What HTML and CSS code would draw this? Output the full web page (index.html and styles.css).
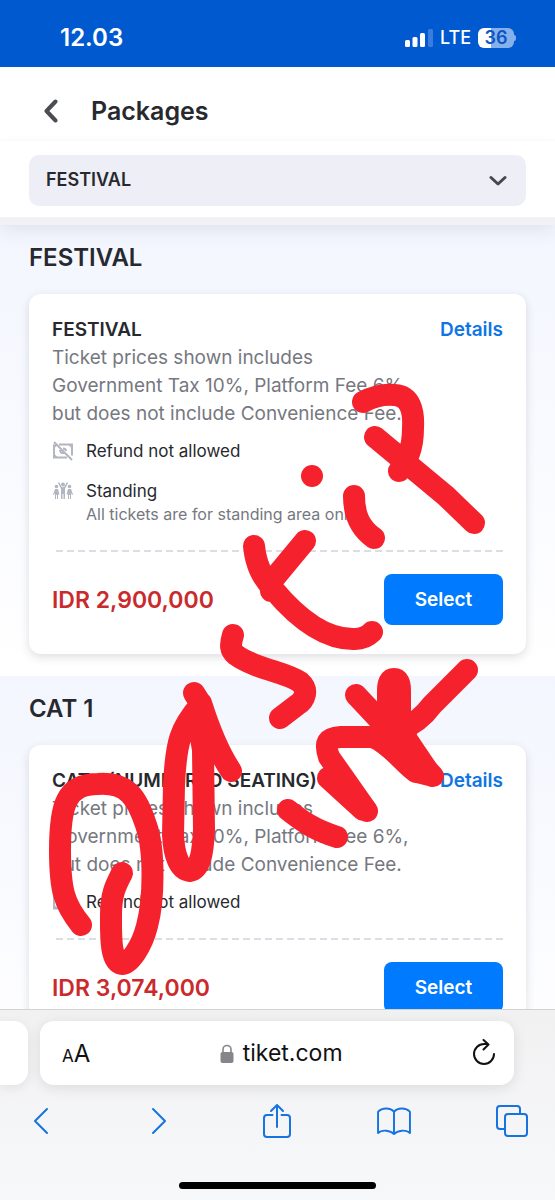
FILE: index.html
```html
<!DOCTYPE html>
<html lang="en">
<head>
<meta charset="utf-8">
<meta name="viewport" content="width=device-width, initial-scale=1">
<title>Packages</title>
<link rel="stylesheet" href="styles.css">
</head>
<body>
<div class="screen">
  <div class="status">
    <span class="status-time">12.03</span>
    <div class="status-right">
      <svg class="signal" width="28" height="18" viewBox="0 0 28 18" aria-hidden="true">
        <rect x="0" y="11" width="5" height="7" rx="1.5" fill="#fff"/>
        <rect x="7.500" y="8" width="5" height="10" rx="1.500" fill="#fff"/>
        <rect x="15" y="4" width="5" height="14" rx="1.500" fill="#fff"/>
        <rect x="23" y="0" width="5" height="18" rx="1.500" fill="#3a7de0"/>
      </svg>
      <span class="network">LTE</span>
      <span class="battery">36</span>
    </div>
  </div>

  <header class="top">
    <button class="back" type="button" aria-label="Back">
      <svg width="14" height="24" viewBox="0 0 14 24"><path d="M11.500 2.500L2.500 12l9 9.500" fill="none" stroke="#4a4d52" stroke-width="4" stroke-linecap="round" stroke-linejoin="round"/></svg>
    </button>
    <h1 class="top-title">Packages</h1>
  </header>

  <div class="filter">
    <div class="picker">
      <select class="picker-select" aria-label="Package category">
        <option>FESTIVAL</option>
        <option>CAT 1</option>
      </select>
      <svg class="picker-arrow" width="18" height="12" viewBox="0 0 18 12" aria-hidden="true"><path d="M2 2.500l7 6.500 7-6.500" fill="none" stroke="#44484f" stroke-width="3" stroke-linecap="round" stroke-linejoin="round"/></svg>
    </div>
  </div>

  <main class="list">
    <section class="group">
      <h2 class="group-title">FESTIVAL</h2>
      <article class="card">
        <div class="card-head">
          <h3 class="card-title">FESTIVAL</h3>
          <a class="details" href="#festival">Details</a>
        </div>
        <p class="desc">Ticket prices shown includes Government Tax 10%, Platform Fee 6%, but does not include Convenience Fee.</p>
        <ul class="facts">
          <li class="fact">
            <svg class="fact-icon" width="22" height="22" viewBox="0 0 22 22" aria-hidden="true"><path d="M7 4.500h13v11M15 17.500H2v-13" fill="none" stroke="#b3b6c2" stroke-width="2"/><path d="M2 4.500l4 0-4 4zM20 4.500v4l-4-4zM2 17.500v-4l4 4z" fill="#b3b6c2"/><path d="M8 10c0 2 1.500 3.500 4 3M11 8.500c2 0 3 1 3 2.500M2 2l18 18" fill="none" stroke="#b3b6c2" stroke-width="2"/></svg>
            <span class="fact-name">Refund not allowed</span>
          </li>
          <li class="fact">
            <svg class="fact-icon" width="22" height="22" viewBox="0 0 22 22" aria-hidden="true"><g fill="#b3b6c2"><circle cx="11" cy="4.500" r="2"/><circle cx="4.500" cy="6.500" r="1.800"/><circle cx="17.500" cy="6.500" r="1.800"/><path d="M3 9h3l1.500 5.500-1 .5L6 13v6H5v-4H4v4H3v-6l-1 2-1-.5zM16 9h3l2 5.500-1 .5-1-2v6h-1v-4h-1v4h-1v-6l-.5 2-1-.5z"/></g><path d="M6.500 2.500L9.500 8h3l3-5.500" fill="none" stroke="#b3b6c2" stroke-width="1.500"/><path d="M9 7.500h4V19h-1.500v-5h-1v5H9z" fill="#b3b6c2"/></svg>
            <span class="fact-name">Standing</span>
            <span class="fact-note">All tickets are for standing area only</span>
          </li>
        </ul>
        <div class="buy">
          <strong class="price">IDR 2,900,000</strong>
          <button class="select" type="button">Select</button>
        </div>
      </article>
    </section>

    <section class="group">
      <h2 class="group-title">CAT 1</h2>
      <article class="card">
        <div class="card-head">
          <h3 class="card-title">CAT 1 (NUMBERED SEATING)</h3>
          <a class="details" href="#cat-1">Details</a>
        </div>
        <p class="desc">Ticket prices shown includes Government Tax 10%, Platform Fee 6%, but does not include Convenience Fee.</p>
        <ul class="facts">
          <li class="fact">
            <svg class="fact-icon" width="22" height="22" viewBox="0 0 22 22" aria-hidden="true"><path d="M7 4.500h13v11M15 17.500H2v-13" fill="none" stroke="#b3b6c2" stroke-width="2"/><path d="M2 4.500l4 0-4 4zM20 4.500v4l-4-4zM2 17.500v-4l4 4z" fill="#b3b6c2"/><path d="M8 10c0 2 1.500 3.500 4 3M11 8.500c2 0 3 1 3 2.500M2 2l18 18" fill="none" stroke="#b3b6c2" stroke-width="2"/></svg>
            <span class="fact-name">Refund not allowed</span>
          </li>
        </ul>
        <div class="buy">
          <strong class="price">IDR 3,074,000</strong>
          <button class="select" type="button">Select</button>
        </div>
      </article>
    </section>
  </main>

  <footer class="browser">
    <div class="tabs">
      <div class="tab-prev"></div>
      <div class="address">
        <button class="text-size" type="button" aria-label="Page settings"><span class="small-a">A</span>A</button>
        <button class="site" type="button">
          <svg width="14" height="19" viewBox="0 0 14 19" aria-hidden="true"><rect x="0.500" y="8" width="13" height="11" rx="2" fill="#86868a"/><path d="M3 9V5.500a4 4 0 0 1 8 0V9" fill="none" stroke="#86868a" stroke-width="1.600"/></svg>
          tiket.com
        </button>
        <button class="reload" type="button" aria-label="Reload">
          <svg width="24" height="28" viewBox="0 0 24 28"><path d="M22 15A10 10 0 1 1 12 5h4M11.500 1l5 4.500-5 5" fill="none" stroke="#111" stroke-width="2" stroke-linecap="round" stroke-linejoin="round"/></svg>
        </button>
      </div>
    </div>
    <nav class="tools">
      <button class="tool" type="button" aria-label="Previous page"><svg width="16" height="28" viewBox="0 0 16 28"><path d="M14 2L2 14l12 12"/></svg></button>
      <button class="tool" type="button" aria-label="Next page"><svg width="16" height="28" viewBox="0 0 16 28"><path d="M2 2l12 12L2 26"/></svg></button>
      <button class="tool" type="button" aria-label="Share"><svg width="28" height="36" viewBox="0 0 28 36"><path d="M9.500 12H4a3 3 0 0 0-3 3v16a3 3 0 0 0 3 3h20a3 3 0 0 0 3-3V15a3 3 0 0 0-3-3h-5.500M14 24V2M8 8l6-6 6 6"/></svg></button>
      <button class="tool" type="button" aria-label="Bookmarks"><svg width="34" height="29" viewBox="0 0 35 30"><path d="M17.500 28V5C14 0.500 5 0.500 1 5v22c4-4 13-3 16.500 1M17.500 5C21 .5 30 .5 34 5v22c-4-4-13-3-16.500 1"/></svg></button>
      <button class="tool" type="button" aria-label="Tabs"><svg width="32" height="32" viewBox="0 0 32 32"><rect x="9" y="9" width="22" height="22" rx="3"/><path d="M9 24H4a3 3 0 0 1-3-3V4a3 3 0 0 1 3-3h17a3 3 0 0 1 3 3v5"/></svg></button>
    </nav>
    <div class="home"></div>
  </footer>

  <svg class="ink" viewBox="0 0 555 1200" role="img" aria-label="Handwritten marker note">
    <g fill="none" stroke="#f5222e" stroke-width="22" stroke-linecap="round" stroke-linejoin="round">
      <path d="M81 925C64 904 60 890 60 850C60 805 66 784 98 784C127 782 137 797 146 825C155 850 154 900 147 926C142 946 130 964 122 964C110 962 111 935 111 915C111 893 116 885 122 873"/>
      <path d="M194 693L201 704C180 728 176 742 174 785L173 835C174 857 180 870 190 871C201 869 203 850 204 830L203 750L197 713M201 703C207 722 217 750 231 771"/>
      <path d="M233 635C230 645 230 650 236 655C255 669 286 672 300 682C309 690 305 700 297 705L280 718"/>
      <path d="M254 546C256 565 262 577 273 589C298 619 325 640 355 639C362 639 367 637 372 632M305 541L271 582L271 591"/>
      <path d="M354 496C354 515 360 528 374 538"/>
      <path d="M312 476v.01"/>
      <path d="M363 402C374 396 385 394 395 395C410 396 414 410 413 428C413 450 407 460 399 471M375 437L446 496L474 523"/>
      <path d="M288 810C303 822 315 830 337 837"/>
      <path d="M367 811L329 757C324 742 327 738 341 737L372 737C389 742 402 762 416 772M328 778L363 810M356 695L387 728L433 776M388 735V690Q388 679 394 679Q400 679 400 690V735M467 670L432 705C424 716 415 724 400 730"/>
    </g>
    <path d="M370 715L412 712L417 735L442 772L432 787L416 783L375 750zM325 765L350 772L376 805L360 819z" fill="#f5222e"/>
  </svg>
</div>
</body>
</html>
```
FILE: styles.css
```css
* { box-sizing: border-box; }
body {
  margin: 0;
  font-family: Inter, "Liberation Sans", sans-serif;
  color: #27292e;
  background: #fff;
}
button { font: inherit; border: 0; padding: 0; background: none; color: inherit; display: flex; align-items: center; justify-content: center; }
h1, h2, h3, p, ul { margin: 0; padding: 0; }
svg { display: block; flex: none; }

.screen { position: relative; height: 100vh; display: flex; flex-direction: column; overflow: hidden; }

.status {
  flex: none;
  height: 67px;
  padding: 8px 41px 0 60px;
  display: flex;
  align-items: center;
  justify-content: space-between;
  background: #0059cf;
  color: #fff;
}
.status-time { font-size: 24px; font-weight: 600; }
.status-right { display: flex; align-items: center; gap: 7px; }
.network { font-size: 18px; font-weight: 500; }
.battery {
  position: relative;
  width: 36px;
  height: 20px;
  border-radius: 6px;
  background: linear-gradient(90deg, #fff 36%, #85b0ea 36%);
  color: #0a56c4;
  font-size: 18px;
  font-weight: 600;
  line-height: 20px;
  text-align: center;
}
.battery::after {
  content: "";
  position: absolute;
  left: 100%;
  top: 7px;
  width: 2px;
  height: 6px;
  border-radius: 0 2px 2px 0;
  background: #85b0ea;
}

.top { flex: none; height: 74px; padding: 14px 44px 0; display: flex; align-items: center; gap: 33px; }
.top-title { font-size: 25px; font-weight: 600; }
.filter {
  flex: none;
  position: relative;
  padding: 14px 29px 11px;
  background: #fff;
  box-shadow: 0 -1px 3px #f9f9fa, 0 8px 0 #f2f2f4, 0 12px 18px rgba(60, 70, 110, .12);
}
.picker { position: relative; }
.picker-select {
  appearance: none;
  display: block;
  width: 100%;
  height: 51px;
  padding: 0 48px 2px 17px;
  border: 0;
  border-radius: 10px;
  background: #eeeef7;
  color: #27292e;
  font: 600 18px Inter, "Liberation Sans", sans-serif;
}
.picker-arrow { position: absolute; right: 19px; top: 20px; pointer-events: none; }

.list { flex: 1; min-height: 0; padding-top: 8px; overflow: hidden; }
.group { padding: 17px 29px 22px; background: linear-gradient(#f3f6fe, #f9faff 50%, #fff); }
.group-title { margin-bottom: 20px; font-size: 24px; line-height: 32px; font-weight: 600; }
.card {
  padding: 22px 23px 29px;
  border-radius: 12px;
  background: #fff;
  box-shadow: 0 3px 10px rgba(50, 55, 80, .16);
}
.card-head { display: flex; justify-content: space-between; line-height: 28px; }
.card-title { font-size: 19px; font-weight: 600; white-space: nowrap; }
.details { font-size: 19px; font-weight: 600; color: #0f75e4; text-decoration: none; }
.desc { max-width: 372px; font-size: 19px; line-height: 28px; color: #76787f; }
.facts { display: grid; gap: 17px; padding: 12px 0 24px; list-style: none; }
.fact { display: grid; grid-template-columns: 22px 1fr; column-gap: 12px; line-height: 23px; }
.fact-name { font-size: 17px; }
.fact-note { grid-column: 2; font-size: 16px; color: #76787f; }
.buy {
  display: flex;
  align-items: center;
  justify-content: space-between;
  padding-top: 24px;
  background: repeating-linear-gradient(90deg, transparent 0 4px, #dcdee6 4px 11px) top / 100% 2px no-repeat;
}
.price { font-size: 23px; font-weight: 600; color: #cb2a2d; }
.select { width: 119px; height: 51px; border-radius: 8px; background: #007bff; color: #fff; font-size: 19px; font-weight: 600; }

.browser {
  flex: none;
  position: relative;
  border-top: 1px solid #d2d2d4;
  background: linear-gradient(#f1f1f2, #f7f8fa);
  padding: 11px 0;
}
.tabs { display: flex; gap: 12px; padding-right: 41px; }
.tab-prev { width: 28px; border-radius: 0 14px 14px 0; background: #fff; box-shadow: 0 3px 12px rgba(0, 0, 0, .08); }
.address {
  flex: 1;
  height: 64px;
  padding: 0 18px 0 22px;
  display: flex;
  align-items: center;
  justify-content: space-between;
  border-radius: 14px;
  background: #fff;
  box-shadow: 0 3px 14px rgba(0, 0, 0, .1);
  color: #111;
}
.text-size { align-items: baseline; font-size: 24px; }
.small-a { font-size: 17px; }
.site { gap: 9px; font-size: 23px; }
.tools { display: flex; justify-content: space-between; align-items: center; height: 72px; padding: 0 26px 0 24px; }
.tool { width: 34px; }
.tool svg { fill: none; stroke: #1673e0; stroke-width: 2; stroke-linecap: round; stroke-linejoin: round; }
.home { width: 197px; height: 7px; margin: 25px auto 0; border-radius: 4px; background: #000; }

.ink { position: absolute; left: 0; top: 0; width: 100%; pointer-events: none; }
```
